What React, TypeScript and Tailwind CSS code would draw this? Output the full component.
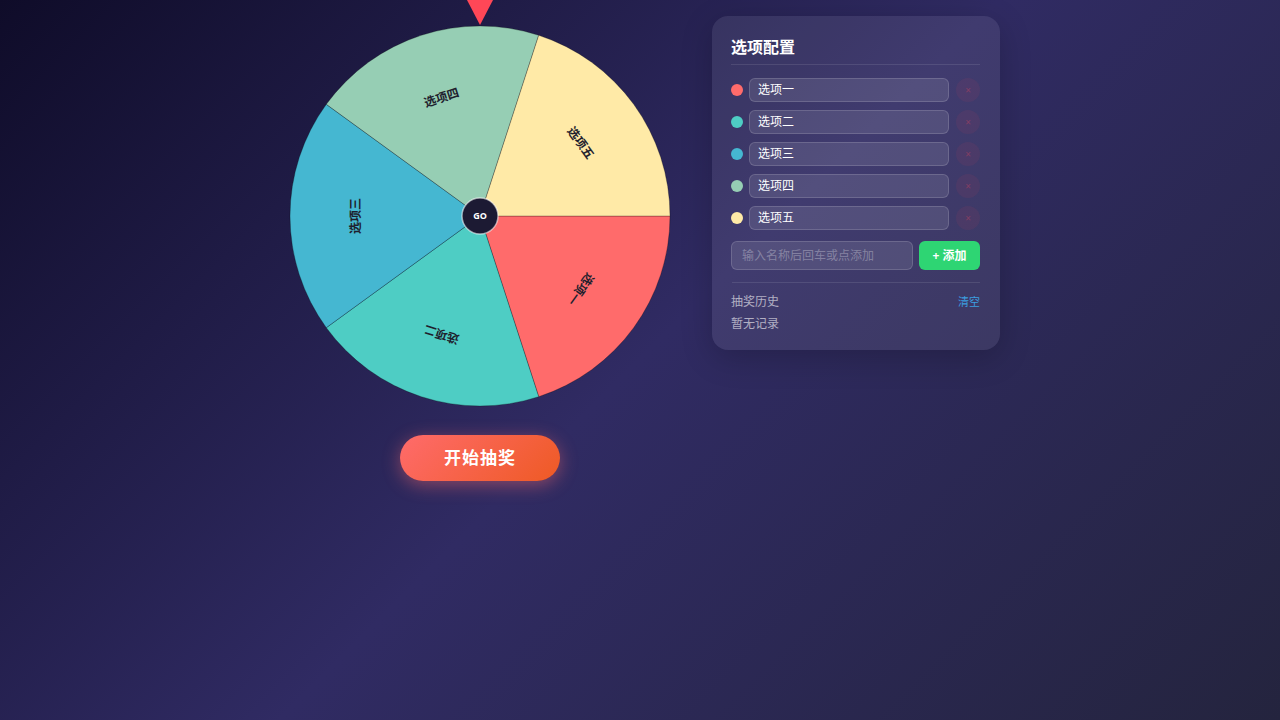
import React from "react";

const options = [
  { name: "选项一", color: "#ff6b6b" },
  { name: "选项二", color: "#4ecdc4" },
  { name: "选项三", color: "#45b7d1" },
  { name: "选项四", color: "#96ceb4" },
  { name: "选项五", color: "#ffeaa7" },
];

const Wheel = () => {
  const cx = 200;
  const cy = 200;
  const r = 190;
  const arc = (Math.PI * 2) / options.length;

  return (
    <svg width="400" height="400" viewBox="0 0 400 400">
      {options.map((opt, i) => {
        const a0 = i * arc;
        const a1 = a0 + arc;
        const x0 = cx + r * Math.cos(a0);
        const y0 = cy + r * Math.sin(a0);
        const x1 = cx + r * Math.cos(a1);
        const y1 = cy + r * Math.sin(a1);
        const mid = a0 + arc / 2;
        const tx = cx + r * 0.65 * Math.cos(mid);
        const ty = cy + r * 0.65 * Math.sin(mid);
        const deg = (mid * 180) / Math.PI + 90;
        return (
          <g key={opt.name}>
            <path
              d={`M${cx} ${cy} L${x0} ${y0} A${r} ${r} 0 0 1 ${x1} ${y1} Z`}
              fill={opt.color}
              stroke="rgba(0,0,0,0.25)"
              strokeWidth="1"
            />
            <text
              x={tx}
              y={ty}
              transform={`rotate(${deg} ${tx} ${ty})`}
              textAnchor="middle"
              dominantBaseline="middle"
              fontSize="12"
              fontWeight="700"
              fill="#1f1f2e"
            >
              {opt.name}
            </text>
          </g>
        );
      })}
      <circle cx={cx} cy={cy} r="18" fill="#1c1a33" stroke="rgba(255,255,255,0.55)" strokeWidth="1.5" />
      <text x={cx} y={cy + 0.5} textAnchor="middle" dominantBaseline="middle" fontSize="9" fontWeight="700" fill="#ffffff">
        GO
      </text>
    </svg>
  );
};

const App = () => {
  return (
    <div
      className="min-h-screen w-full bg-[linear-gradient(135deg,#0f0c29_0%,#302b63_50%,#24243e_100%)] flex justify-center items-start gap-8 pt-4"
      style={{ fontFamily: '"Noto Sans", "Noto Sans CJK SC", sans-serif' }}
    >
      <div className="flex flex-col items-center w-[400px]">
        <div className="relative w-[400px] h-[400px]">
          <div className="absolute left-1/2 -translate-x-1/2 -top-4 w-0 h-0 border-l-[13px] border-r-[13px] border-t-[25px] border-l-transparent border-r-transparent border-t-[#ff4757] z-10" />
          <Wheel />
        </div>
        <button className="mt-[19px] w-[160px] h-[46px] rounded-full bg-[linear-gradient(135deg,#ff6b6b,#ee5a24)] text-white text-[17px] font-bold tracking-[1px] shadow-[0_4px_18px_rgba(255,107,107,0.45)]">
          开始抽奖
        </button>
      </div>

      <div className="w-[288px] rounded-2xl bg-white/[0.08] px-5 pt-5 pb-[18px] shadow-[0_8px_32px_rgba(0,0,0,0.2)]">
        <h2 className="text-white text-base font-bold leading-[22px] pb-[6px] border-b border-white/10 -ml-px">选项配置</h2>
        <div className="flex flex-col gap-2 mt-[13px]">
          {options.map((opt) => (
            <div key={opt.name} className="flex items-center gap-[6px] -ml-px">
              <span className="w-3 h-3 rounded-full shrink-0" style={{ backgroundColor: opt.color }} />
              <div className="flex-1 h-6 rounded-md bg-white/10 border border-white/15 text-white text-xs flex items-center pl-2">
                {opt.name}
              </div>
              <div className="w-6 h-6 ml-px rounded-full bg-[#ff4757]/[0.07] flex items-center justify-center text-[#ff4757]/30 text-[10px] leading-none">
                ×
              </div>
            </div>
          ))}
        </div>
        <div className="flex gap-[6px] mt-[11px] -ml-px">
          <div className="flex-1 h-[29px] rounded-md bg-white/10 border border-white/15 text-white/30 text-xs flex items-center pl-[10px]">
            输入名称后回车或点添加
          </div>
          <button className="w-[61px] h-[29px] rounded-md bg-[#2ed573] text-white text-xs font-bold">+ 添加</button>
        </div>
        <div className="mt-3 border-t border-white/10 pt-[11px]">
          <div className="flex justify-between items-center -ml-px">
            <span className="text-white/60 text-xs leading-4">抽奖历史</span>
            <span className="text-[#3b9ee0] text-[11px] leading-4">清空</span>
          </div>
          <div className="text-white/60 text-xs leading-4 mt-[6px] -ml-px">暂无记录</div>
        </div>
      </div>
    </div>
  );
};

export default App;
